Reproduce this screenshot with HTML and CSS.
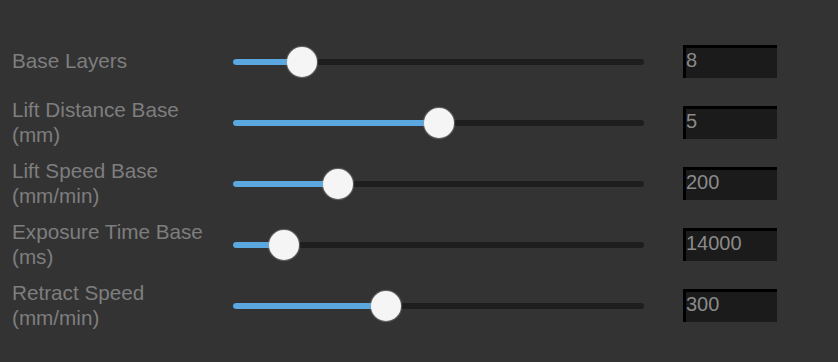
FILE: index.html
```html
<!DOCTYPE html>
<html>
<head>
<meta charset="utf-8">
<link rel="stylesheet" href="styles.css">
</head>
<body>
<div class="panel">
  <div class="row">
    <div class="label">Base Layers</div>
    <div class="slider"><div class="fill" style="width:69px"></div><div class="thumb" style="left:69px"></div></div>
    <input class="value" type="text" value="8">
  </div>
  <div class="row">
    <div class="label">Lift Distance Base<br>(mm)</div>
    <div class="slider"><div class="fill" style="width:206px"></div><div class="thumb" style="left:206px"></div></div>
    <input class="value" type="text" value="5">
  </div>
  <div class="row">
    <div class="label">Lift Speed Base<br>(mm/min)</div>
    <div class="slider"><div class="fill" style="width:105px"></div><div class="thumb" style="left:105px"></div></div>
    <input class="value" type="text" value="200">
  </div>
  <div class="row">
    <div class="label">Exposure Time Base<br>(ms)</div>
    <div class="slider"><div class="fill" style="width:51px"></div><div class="thumb" style="left:51px"></div></div>
    <input class="value" type="text" value="14000">
  </div>
  <div class="row">
    <div class="label">Retract Speed<br>(mm/min)</div>
    <div class="slider"><div class="fill" style="width:153px"></div><div class="thumb" style="left:153px"></div></div>
    <input class="value" type="text" value="300">
  </div>
</div>
</body>
</html>
```
FILE: styles.css
```css
html, body {
  margin: 0;
  padding: 0;
  background: #333333;
  width: 838px;
  height: 362px;
  overflow: hidden;
}
.panel {
  padding-top: 31px;
  padding-left: 12px;
  font-family: "Liberation Sans", Arial, sans-serif;
}
.row {
  height: 61px;
  display: flex;
  align-items: center;
}
.label {
  width: 221px;
  color: #7e7e7e;
  font-size: 20.7px;
  line-height: 25px;
  padding-bottom: 2px;
}
.slider {
  position: relative;
  width: 411px;
  height: 6px;
  border-radius: 3px;
  background: #1e1e1e;
}
.fill {
  height: 6px;
  border-radius: 3px;
  background: #5aa8df;
}
.thumb {
  position: absolute;
  top: 50%;
  width: 30px;
  height: 30px;
  margin-left: -15px;
  margin-top: -15px;
  border-radius: 50%;
  background: #f5f5f5;
  box-shadow: 0 0 1px 1px rgba(160,160,160,0.5);
}
.value {
  margin-left: 39px;
  width: 94px;
  height: 33px;
  box-sizing: border-box;
  border-style: solid;
  border-width: 3px 0 0 3px;
  border-color: #000 #1b1b1b #1b1b1b #000;
  background: #1b1b1b;
  color: #8a8a8a;
  font-family: "Liberation Sans", Arial, sans-serif;
  font-size: 20px;
  padding: 0 0 5px 0;
  outline: none;
}
```
